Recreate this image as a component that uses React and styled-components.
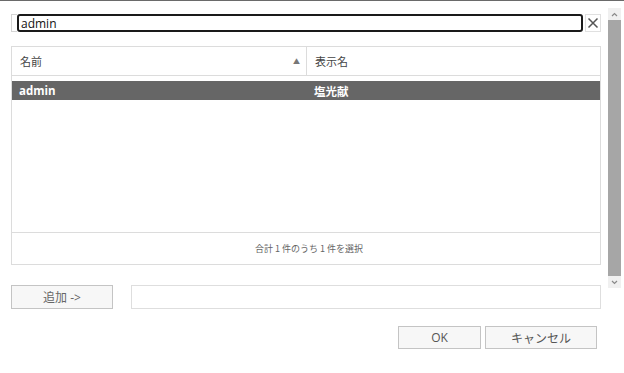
import styled, { createGlobalStyle } from "styled-components";

const GlobalStyle = createGlobalStyle`
  html, body {
    margin: 0;
    padding: 0;
    background: #fff;
  }
  body {
    font-family: "Open Sans", "Noto Sans CJK JP", sans-serif;
    font-size: 12px;
    color: #333;
  }
`;

const Dialog = styled.div`
  width: 624px;
  height: 373px;
  box-sizing: border-box;
  border-top: 1px solid #6a6a6a;
  display: flex;
`;

const Content = styled.div`
  width: 601px;
  box-sizing: border-box;
  padding: 13px 0 0 11px;
  display: flex;
  flex-direction: column;
`;

const SearchRow = styled.div`
  display: flex;
  align-items: stretch;
  height: 18px;
`;

const Stub = styled.div`
  width: 5px;
  border: 1px solid #d4d4d4;
  border-right: none;
`;

const SearchInput = styled.div`
  flex: 1;
  box-sizing: border-box;
  border: 2px solid #1a1a1a;
  border-radius: 3px;
  padding: 0 2px;
  display: flex;
  align-items: center;
  font-size: 12px;
  color: #111;
`;

const ClearButton = styled.div`
  width: 16px;
  margin-left: 2px;
  box-sizing: border-box;
  border: 1px solid #e0e0e0;
  display: flex;
  align-items: center;
  justify-content: center;
`;

const Table = styled.div`
  margin-top: 14px;
  height: 219px;
  box-sizing: border-box;
  border: 1px solid #dcdcdc;
  display: flex;
  flex-direction: column;
`;

const HeaderRow = styled.div`
  display: flex;
  height: 28px;
  border-bottom: 1px solid #dcdcdc;
`;

const HeaderCell = styled.div`
  width: ${(p) => p.$width || "auto"};
  flex: ${(p) => (p.$width ? "none" : 1)};
  box-sizing: border-box;
  padding: 0 8px;
  display: flex;
  align-items: center;
  justify-content: space-between;
  border-right: ${(p) => (p.$divider ? "1px solid #dcdcdc" : "none")};
  color: #444;
  font-family: "Noto Sans CJK JP", sans-serif;
  font-size: 11px;
`;

const SortArrow = styled.span`
  font-size: 7px;
  color: #777;
  margin-right: -2px;
`;

const Body = styled.div`
  flex: 1;
  padding-top: 5px;
`;

const Row = styled.div`
  display: flex;
  height: 19px;
  background: ${(p) => (p.$selected ? "#666666" : "transparent")};
  color: ${(p) => (p.$selected ? "#fff" : "#333")};
  font-weight: 700;
`;

const Cell = styled.div`
  width: ${(p) => p.$width || "auto"};
  flex: ${(p) => (p.$width ? "none" : 1)};
  box-sizing: border-box;
  padding-left: ${(p) => p.$pad || "7px"};
  display: flex;
  align-items: center;
  font-family: "Open Sans", "Noto Sans CJK JP", sans-serif;
  font-size: 11.5px;
`;

const Footer = styled.div`
  height: 31px;
  border-top: 1px solid #dcdcdc;
  display: flex;
  align-items: center;
  justify-content: center;
  color: #666;
  font-family: "Noto Sans CJK JP", sans-serif;
  font-size: 9px;
  padding-left: 6px;
`;

const AddRow = styled.div`
  margin-top: 20px;
  display: flex;
  align-items: stretch;
  height: 24px;
`;

const Button = styled.div`
  width: ${(p) => p.$width};
  height: ${(p) => p.$height || "23px"};
  box-sizing: border-box;
  border: 1px solid #c4c4c4;
  background: #f7f7f7;
  display: flex;
  align-items: center;
  justify-content: center;
  color: ${(p) => p.$color || "#444"};
  font-family: "Open Sans", "Noto Sans CJK JP", sans-serif;
  font-size: 12px;
`;

const TextBox = styled.div`
  flex: 1;
  margin-left: 18px;
  box-sizing: border-box;
  border: 1px solid #dedede;
`;

const ActionRow = styled.div`
  margin-top: 17px;
  margin-right: 4px;
  display: flex;
  justify-content: flex-end;
  gap: 4px;
`;

const ScrollBar = styled.div`
  margin: 7px 0 0 7px;
  width: 13px;
  height: 280px;
  background: #f0f0f0;
  display: flex;
  flex-direction: column;
  align-items: center;
`;

const ScrollArrow = styled.div`
  height: 12px;
  display: flex;
  align-items: center;
  justify-content: center;
`;

const Thumb = styled.div`
  flex: 1;
  width: 13px;
  background: #a6a6a6;
`;

function Chevron({ up }) {
  return (
    <svg width="7" height="5" viewBox="0 0 7 5">
      <path
        d={up ? "M1 4 L3.5 1.5 L6 4" : "M1 1 L3.5 3.5 L6 1"}
        fill="none"
        stroke="#8a8a8a"
        strokeWidth="1.2"
      />
    </svg>
  );
}

function App() {
  return (
    <>
      <GlobalStyle />
      <Dialog>
        <Content>
          <SearchRow>
            <Stub />
            <SearchInput>admin</SearchInput>
            <ClearButton>
              <svg width="12" height="12" viewBox="0 0 12 12">
                <path d="M1.5 1.5 L10.5 10.5 M10.5 1.5 L1.5 10.5" stroke="#555" strokeWidth="1.5" />
              </svg>
            </ClearButton>
          </SearchRow>

          <Table>
            <HeaderRow>
              <HeaderCell $width="295px" $divider>
                <span>名前</span>
                <SortArrow>▲</SortArrow>
              </HeaderCell>
              <HeaderCell>
                <span>表示名</span>
              </HeaderCell>
            </HeaderRow>
            <Body>
              <Row $selected>
                <Cell $width="294px">admin</Cell>
                <Cell $pad="8px">塩光献</Cell>
              </Row>
            </Body>
            <Footer>合計 1 件のうち 1 件を選択</Footer>
          </Table>

          <AddRow>
            <Button $width="102px" $height="24px" $color="#666">追加 -&gt;</Button>
            <TextBox />
          </AddRow>

          <ActionRow>
            <Button $width="83px" $color="#555">OK</Button>
            <Button $width="112px" $color="#555">キャンセル</Button>
          </ActionRow>
        </Content>
        <ScrollBar>
          <ScrollArrow>
            <Chevron up />
          </ScrollArrow>
          <Thumb />
          <ScrollArrow>
            <Chevron />
          </ScrollArrow>
        </ScrollBar>
      </Dialog>
    </>
  );
}

export default App;
